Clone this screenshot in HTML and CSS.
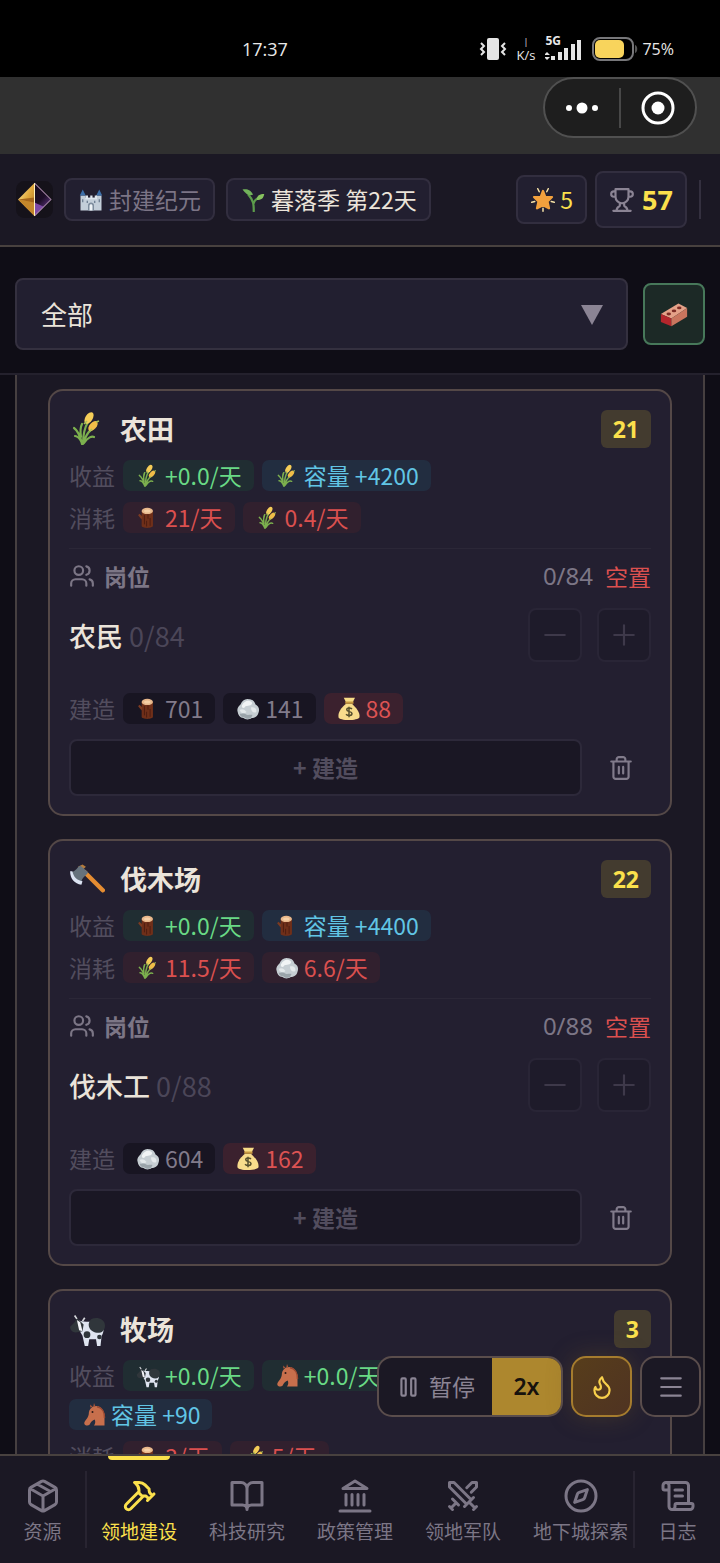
FILE: index.html
```html
<!DOCTYPE html>
<html lang="zh-CN">
<head>
<meta charset="utf-8">
<meta name="viewport" content="width=device-width, initial-scale=1">
<title>领地建设</title>
<link rel="stylesheet" href="styles.css">
</head>
<body>
<svg class="sprite" aria-hidden="true">
  <defs>
    <linearGradient id="gold" x1="0" y1="0" x2="1" y2="1"><stop offset="0" stop-color="#fff0a8"/><stop offset=".5" stop-color="#e0a83c"/><stop offset="1" stop-color="#a4651c"/></linearGradient>
    <linearGradient id="violet" x1="0" y1="0" x2="1" y2="1"><stop offset="0" stop-color="#140c18"/><stop offset=".6" stop-color="#1c0d26"/><stop offset="1" stop-color="#8c4fc0"/></linearGradient>
  </defs>
  <symbol id="wheat" viewBox="0 -2 36 36">
    <g fill="none" stroke="#7cb04e" stroke-width="2.200" stroke-linecap="round"><path d="M13 31C11 22 8 17 5 15M14 31C14 21 16 14 19 9M14 31c2-7 5-12 9-15M13 30C10 24 8 23 6 23M15 30c4-6 8-7 10-6M12 24C11 18 11 15 13 11"/></g>
    <ellipse cx="20" cy="5" rx="3.600" ry="6.500" transform="rotate(32 20 5)" fill="#f5cd58"/>
    <ellipse cx="24" cy="13" rx="3.300" ry="6" transform="rotate(42 24 13)" fill="#f0bd48"/>
    <path d="M15 11l3-3M21 18l2-2M27 9l3-1" stroke="#a6c057" stroke-width="1.500"/>
  </symbol>
  <symbol id="wood" viewBox="1 0 34 34">
    <path d="M9 7v21c0 4 16 4 16 0V7z" fill="#6f2f19"/><path d="M10 15 6 11 4 13l5 6z" fill="#7c3a20"/>
    <path d="M13 13v13M18 12v6M21 17v11M16 21v8" stroke="#4b1d10" stroke-width="1.300"/>
    <ellipse cx="17" cy="7" rx="8" ry="4.500" fill="#e7b78b"/><ellipse cx="17" cy="7" rx="4.500" ry="2.200" fill="#f5d0a6"/>
  </symbol>
  <symbol id="stone" viewBox="0 0 32 32">
    <path d="M2 19c-1-4 2-7 4-9 2-5 6-8 11-7 5 0 8 3 9 7 4 2 6 6 4 11-1 5-5 7-9 7-4 3-9 2-11 0-5 0-7-4-8-9z" fill="#c6ced3"/>
    <path d="M8 11c3-6 9-8 13-4 2 4-4 5-8 5-2 4-6 3-5-1z" fill="#f1f4f5"/><path d="M20 14c5-1 8 2 7 6-3 2-7 0-7-6z" fill="#e6eaec"/><path d="M5 17c4-2 7 0 9 3-3 3-8 2-9-3z" fill="#e3e8ea"/>
    <path d="M5 22c3 1 6-1 8 1s6 0 9 1l-2 4c-3 2-7 1-9-1-4 0-6-2-6-5z" fill="#9aa4aa"/>
  </symbol>
  <symbol id="money" viewBox="0 0 32 32">
    <path d="M9 1h15l-3 6h-9z" fill="#f7dc86"/><path d="M12 9C6 14 1 20 2 27c1 5 26 5 28 0 1-7-5-13-10-18z" fill="#f8dc8c"/><path d="M11 6h11v3H11z" fill="#c79840"/>
    <path d="M20 16c-2-2-7-2-7 1s7 2 7 5-5 4-8 1M16 13v14" fill="none" stroke="#57502f" stroke-width="2"/>
  </symbol>
  <symbol id="axe" viewBox="0 0 32 32">
    <path d="M14 10 30 26" stroke="#e58d32" stroke-width="4" stroke-linecap="round"/><path d="M8 5l4-2 3 2-4 4z" fill="#b47b3c"/>
    <path d="M2 10C6 9 8 5 10 4l7 6c-2 4-6 4-6 10C5 20 1 15 2 10z" fill="#66727c"/><path d="M1 9c0 7 4 11 10 12l1-3C7 17 4 14 3 9z" fill="#dce3f2"/>
  </symbol>
  <symbol id="cow" viewBox="0 0 32 32">
    <path d="M8 8c6 3 14 0 20 3 4 3 3 8 1 11l-1 9h-3l-1-6h-6l-1 6h-3l-2-9-4-7z" fill="#dfe4f0"/>
    <path d="M20 7c5-2 12 0 12 6s-6 8-11 5-4-9-1-11zM1 14l4-4 2-4 3 3 3 3-1 6-6 1c-3 0-5-2-5-5z" fill="#30363b"/>
    <path d="M7 8l3 2 2 8-3-1z" fill="#f2f3f8"/><circle cx="16" cy="21" r="3" fill="#30363b"/><circle cx="27" cy="23" r="2" fill="#30363b"/><path d="M7 7 5 4M12 9l2-3" stroke="#d5d7db" stroke-width="1.500"/>
  </symbol>
  <symbol id="horse" viewBox="0 0 32 32">
    <path d="M14 5C21 2 28 6 30 15v15H16c2-3 2-5 1-8-3 1-5 3-7 7-2 2-7 1-7-2 0-3 5-6 6-12 0-4 1-7 5-10z" fill="#c76f4c"/>
    <path d="M15 5l1-5 2 5M11 6l0-4 3 3" fill="#a9553a"/><circle cx="14" cy="12" r="1.300" fill="#2b1a16"/><path d="M20 5c7 1 10 8 10 15" fill="none" stroke="#9b4a32" stroke-width="2"/>
  </symbol>
  <symbol id="castle" viewBox="0 0 32 32">
    <path d="M2 10h7v20H2zM23 10h7v20h-7zM8 13h16v17H8z" fill="#c3ced9"/><path d="M1 10l4-8 4 8zM23 10l4-8 4 8z" fill="#3d6fa9"/>
    <path d="M9 13v-3h3v3h3v-3h3v3h3v-3h3v5H8z" fill="#dee6ee"/><path d="M12 30v-7c0-5 8-5 8 0v7z" fill="#7d8c9d"/><path d="M14 30v-6c0-3 4-3 4 0v6z" fill="#edf2f6"/><path d="M5 15v4M27 15v4M11 17v3M21 17v3" stroke="#5f7186" stroke-width="1.500"/>
  </symbol>
  <symbol id="sprout" viewBox="0 0 32 32">
    <path d="M17 31c0-9 0-14-7-22M17 20c1-4 4-6 8-8" fill="none" stroke="#5c9c4b" stroke-width="3" stroke-linecap="round"/><path d="M2 2c6-1 11 0 14 7-6 2-9-1-14-7z" fill="#72b35b"/><path d="M31 8c-1 6-4 8-10 8 0-6 4-8 10-8z" fill="#87c25f"/>
  </symbol>
  <symbol id="star" viewBox="0 0 32 32">
    <path d="m16 4 3 8h9l-6 6 2 9-8-4-8 4 2-9-6-6h9z" fill="#f3a13d" stroke="#f3a13d" stroke-width="3" stroke-linejoin="round"/><path d="M9 1l2 4M23 1l-2 4M1 19l4-1M31 19l-4-1M16 27v4" stroke="#f8e4a8" stroke-width="2" stroke-linecap="round"/>
  </symbol>
  <symbol id="brick" viewBox="0 0 32 32">
    <path d="M1 16 21 4l10 5-18 12z" fill="#e4a188"/><path d="m1 16 12 5v9L1 25z" fill="#b4262c"/><path d="m13 21 18-12v10L13 30z" fill="#c9755e"/>
    <g fill="#7c2c25"><ellipse cx="10" cy="16" rx="2.600" ry="1.600"/><ellipse cx="16" cy="12.500" rx="2.600" ry="1.600"/><ellipse cx="22" cy="9" rx="2.600" ry="1.600"/></g>
  </symbol>
  <symbol id="users" viewBox="0 0 24 24"><circle cx="9" cy="7" r="4"/><path d="M16 21v-2a4 4 0 0 0-4-4H6a4 4 0 0 0-4 4v2M22 21v-2a4 4 0 0 0-3-3.870M16 3.130a4 4 0 0 1 0 7.750"/></symbol>
  <symbol id="trash" viewBox="0 0 24 24"><path d="M3 6h18M19 6v14c0 1-1 2-2 2H7c-1 0-2-1-2-2V6M8 6V4c0-1 1-2 2-2h4c1 0 2 1 2 2v2M10 11v6M14 11v6"/></symbol>
  <symbol id="minus" viewBox="0 0 24 24"><path d="M3 12h18"/></symbol>
  <symbol id="plus" viewBox="0 0 24 24"><path d="M3 12h18M12 3v18"/></symbol>
</svg>

<div class="app">
  <div class="status">
    <span class="clock">17:37</span>
    <div class="status-icons">
      <svg class="vibrate" viewBox="0 0 28 24"><rect x="8" y="1" width="12" height="22" rx="2" fill="#e4e4e4"/><path d="m2 6 3 3-3 3 3 3-3 3M26 6l-3 3 3 3-3 3 3 3" fill="none" stroke="#e4e4e4" stroke-width="2"/></svg>
      <span class="rate"><span>|</span><span>K/s</span></span>
      <span class="network"><span class="gen">5G</span><svg class="bars" viewBox="0 0 37 24"><path d="M2 15l3 3H-1zM2 23l3-3H-1zM6 19h4v4H6zM13 15h4v8h-4zM19 11h4v12h-4zM26 7h4v16h-4zM32 3h4v20h-4z" fill="#e4e4e4"/></svg></span>
      <svg class="battery" viewBox="0 0 46 24"><rect x="1" y="1" width="40" height="22" rx="7" fill="none" stroke="#77777a" stroke-width="2"/><rect x="3" y="3" width="29" height="18" rx="5" fill="#f8d45c"/><path d="M43 8c3 1 3 7 0 8z" fill="#555"/></svg>
      <span class="percent">75%</span>
    </div>
  </div>
  <div class="host">
    <div class="capsule">
      <button class="cap-btn" aria-label="更多"><svg width="34" height="16" viewBox="0 0 34 16" fill="#fff"><circle cx="4" cy="8" r="3"/><circle cx="17" cy="8" r="5.500"/><circle cx="30" cy="8" r="3"/></svg></button>
      <button class="cap-btn" aria-label="关闭"><svg width="36" height="36" viewBox="0 0 36 36"><circle cx="18" cy="18" r="15" fill="none" stroke="#fff" stroke-width="3"/><circle cx="18" cy="18" r="6.500" fill="#fff"/></svg></button>
    </div>
  </div>

  <header class="header">
    <svg class="gem" viewBox="0 0 36 36"><rect width="36" height="36" rx="8" fill="#15121a"/><path d="M18 2 34 18 18 34 2 18z" fill="url(#violet)"/><path d="M18 2v32L2 18z" fill="url(#gold)"/><path d="M2 18l16 3v13z" fill="#c4872b"/><path d="M18 21l9 4 7-7-16 16z" fill="#7d49a6"/><path d="M2 18l16-2v5z" fill="#a4651c"/><path d="M18 2l16 16-16 16" fill="none" stroke="#a585a5"/><path d="M18 2v32" stroke="#fff0bd"/></svg>
    <div class="pill muted"><svg class="emoji"><use href="#castle"/></svg><span>封建纪元</span></div>
    <div class="pill"><svg class="emoji"><use href="#sprout"/></svg><span>暮落季 第22天</span></div>
    <div class="stats">
      <div class="pill stat"><svg class="emoji"><use href="#star"/></svg><span>5</span></div>
      <div class="pill stat score"><svg class="line trophy" viewBox="0 0 24 24"><path d="M6 9H4.500a2.500 2.500 0 0 1 0-5H6M18 9h1.500a2.500 2.500 0 0 0 0-5H18M4 22h16M10 14.660V17c0 .55-.47.98-.97 1.210C7.850 18.750 7 20.240 7 22M14 14.660V17c0 .55.47.98.97 1.210C16.150 18.750 17 20.240 17 22M18 2H6v7a6 6 0 0 0 12 0V2Z"/></svg><span>57</span></div>
      <i class="rule"></i>
    </div>
  </header>

  <div class="toolbar">
    <label class="filter">
      <select aria-label="建筑分类"><option>全部</option></select>
      <svg class="caret" viewBox="0 0 22 20"><path d="M0 0h22L11 20z" fill="#8b8494"/></svg>
    </label>
    <button class="brick-btn" aria-label="可建造"><svg class="emoji"><use href="#brick"/></svg></button>
  </div>

  <main class="viewport">
    <div class="panel">
      <article class="card">
        <div class="card-head"><svg class="card-icon"><use href="#wheat"/></svg><h2>农田</h2><span class="count">21</span></div>
        <div class="row"><span class="label">收益</span><span class="chip gain"><svg class="emoji"><use href="#wheat"/></svg>+0.0/天</span><span class="chip cap"><svg class="emoji"><use href="#wheat"/></svg>容量 +4200</span></div>
        <div class="row"><span class="label">消耗</span><span class="chip cost"><svg class="emoji"><use href="#wood"/></svg>21/天</span><span class="chip cost"><svg class="emoji"><use href="#wheat"/></svg>0.4/天</span></div>
        <section class="jobs">
          <div class="jobs-head"><svg class="line"><use href="#users"/></svg><h3>岗位</h3><span class="filled">0/84</span><span class="vacant">空置</span></div>
          <div class="job"><span class="job-name">农民 <small>0/84</small></span><button class="step" disabled aria-label="减少"><svg class="line"><use href="#minus"/></svg></button><button class="step" disabled aria-label="增加"><svg class="line"><use href="#plus"/></svg></button></div>
        </section>
        <div class="row"><span class="label">建造</span><span class="chip"><svg class="emoji"><use href="#wood"/></svg>701</span><span class="chip"><svg class="emoji"><use href="#stone"/></svg>141</span><span class="chip lack"><svg class="emoji"><use href="#money"/></svg>88</span></div>
        <div class="actions"><button class="build" disabled>+ 建造</button><button class="remove" aria-label="拆除"><svg class="line"><use href="#trash"/></svg></button></div>
      </article>

      <article class="card">
        <div class="card-head"><svg class="card-icon"><use href="#axe"/></svg><h2>伐木场</h2><span class="count">22</span></div>
        <div class="row"><span class="label">收益</span><span class="chip gain"><svg class="emoji"><use href="#wood"/></svg>+0.0/天</span><span class="chip cap"><svg class="emoji"><use href="#wood"/></svg>容量 +4400</span></div>
        <div class="row"><span class="label">消耗</span><span class="chip cost"><svg class="emoji"><use href="#wheat"/></svg>11.5/天</span><span class="chip cost"><svg class="emoji"><use href="#stone"/></svg>6.6/天</span></div>
        <section class="jobs">
          <div class="jobs-head"><svg class="line"><use href="#users"/></svg><h3>岗位</h3><span class="filled">0/88</span><span class="vacant">空置</span></div>
          <div class="job"><span class="job-name">伐木工 <small>0/88</small></span><button class="step" disabled aria-label="减少"><svg class="line"><use href="#minus"/></svg></button><button class="step" disabled aria-label="增加"><svg class="line"><use href="#plus"/></svg></button></div>
        </section>
        <div class="row"><span class="label">建造</span><span class="chip"><svg class="emoji"><use href="#stone"/></svg>604</span><span class="chip lack"><svg class="emoji"><use href="#money"/></svg>162</span></div>
        <div class="actions"><button class="build" disabled>+ 建造</button><button class="remove" aria-label="拆除"><svg class="line"><use href="#trash"/></svg></button></div>
      </article>

      <article class="card">
        <div class="card-head"><svg class="card-icon"><use href="#cow"/></svg><h2>牧场</h2><span class="count">3</span></div>
        <div class="row"><span class="label">收益</span><span class="chip gain"><svg class="emoji"><use href="#cow"/></svg>+0.0/天</span><span class="chip gain"><svg class="emoji"><use href="#horse"/></svg>+0.0/天</span></div>
        <div class="row more"><span class="chip cap"><svg class="emoji"><use href="#horse"/></svg>容量 +90</span></div>
        <div class="row"><span class="label">消耗</span><span class="chip cost"><svg class="emoji"><use href="#wood"/></svg>3/天</span><span class="chip cost"><svg class="emoji"><use href="#wheat"/></svg>5/天</span></div>
      </article>
    </div>
  </main>

  <div class="dock">
    <div class="controls">
      <div class="speed">
        <button class="pause"><svg class="line" viewBox="0 0 24 24"><rect x="5" y="4" width="4" height="16" rx="1"/><rect x="14" y="4" width="4" height="16" rx="1"/></svg>暂停</button>
        <button class="rate-btn">2x</button>
      </div>
      <button class="square fire" aria-label="加速"><svg class="line" viewBox="0 0 24 24"><path d="M8.500 14.500A2.500 2.500 0 0 0 11 12c0-1.380-.5-2-1-3-1.070-2.140-.22-4.050 2-6 .5 2.500 2 4.900 4 6.500 2 1.600 3 3.500 3 5.500a7 7 0 1 1-14 0c0-1.150.43-2.290 1-3a2.500 2.500 0 0 0 2.500 2.500z"/></svg></button>
      <button class="square" aria-label="菜单"><svg class="line" viewBox="0 0 24 24"><path d="M3 4h18M3 12h18M3 20h18"/></svg></button>
    </div>
    <nav class="nav">
      <a class="tab edge" href="#resources"><svg class="line" viewBox="0 0 24 24"><path d="M21 8a2 2 0 0 0-1-1.730l-7-4a2 2 0 0 0-2 0l-7 4A2 2 0 0 0 3 8v8a2 2 0 0 0 1 1.730l7 4a2 2 0 0 0 2 0l7-4A2 2 0 0 0 21 16ZM3.300 7l8.700 5 8.700-5M12 22V12M8 4l9 5"/></svg>资源</a>
      <div class="tabs">
        <a class="tab active" href="#build"><svg class="line" viewBox="0 0 24 24"><path d="m15 12-8.500 8.500a2.120 2.120 0 0 1-3-3L12 9M17.640 15 22 10.640M20.910 11.700l-1.250-1.250c-.6-.6-.93-1.400-.93-2.250v-.86L16.010 4.600a5.560 5.560 0 0 0-3.940-1.640H9l.92.82A6.180 6.180 0 0 1 12 8.400v1.560l2 2h2.470l2.260 1.910"/></svg>领地建设</a>
        <a class="tab" href="#tech"><svg class="line" viewBox="0 0 24 24"><path d="M2 3h6a4 4 0 0 1 4 4v14a3 3 0 0 0-3-3H2zM22 3h-6a4 4 0 0 0-4 4v14a3 3 0 0 1 3-3h7z"/></svg>科技研究</a>
        <a class="tab" href="#policy"><svg class="line" viewBox="0 0 24 24"><path d="M2 22h20M6 18v-7M10 18v-7M14 18v-7M18 18v-7M12 2l8 5H4z"/></svg>政策管理</a>
        <a class="tab" href="#army"><svg class="line" viewBox="0 0 24 24"><path d="M14.500 17.500 3 6V3h3l11.500 11.500M13 19l6-6M16 16l4 4M19 21l2-2M14.500 6.500 18 3h3v3l-3.500 3.500M5 14l4 4M7 17l-3 3M3 19l2 2"/></svg>领地军队</a>
        <a class="tab" href="#dungeon"><svg class="line" viewBox="0 0 24 24"><circle cx="12" cy="12" r="10"/><path d="m16.240 7.760-1.800 5.410a2 2 0 0 1-1.270 1.270L7.760 16.240l1.800-5.410a2 2 0 0 1 1.270-1.270z"/></svg>地下城探索</a>
      </div>
      <a class="tab edge" href="#log"><svg class="line" viewBox="0 0 24 24"><path d="M15 12h-5M15 8h-5M19 17V5a2 2 0 0 0-2-2H4M8 21h12a2 2 0 0 0 2-2v-1a1 1 0 0 0-1-1H11a1 1 0 0 0-1 1v1a2 2 0 1 1-4 0V5a2 2 0 1 0-4 0v2a1 1 0 0 0 1 1h3"/></svg>日志</a>
    </nav>
  </div>
</div>
</body>
</html>
```
FILE: styles.css
```css
* { box-sizing: border-box; }
body {
  margin: 0;
  background: #0f0d16;
  color: #ebe4da;
  font: 23px/31px "Noto Sans CJK SC", sans-serif;
}
button, select { font: inherit; color: inherit; margin: 0; padding: 0; }
button { display: flex; align-items: center; justify-content: center; background: none; border: 0; }
h2, h3 { margin: 0; }
svg { flex: none; display: block; }
.sprite { position: absolute; width: 0; height: 0; }
.emoji { width: 26px; height: 24px; }
.line { width: 26px; height: 26px; fill: none; stroke: currentColor; stroke-width: 2; stroke-linecap: round; stroke-linejoin: round; }

.app { display: flex; flex-direction: column; height: 100vh; overflow: hidden; }

.status {
  display: flex; justify-content: space-between; align-items: center;
  flex: none; padding: 34px 46px 13px 242px;
  background: #000; color: #e8e8e8;
  font: 18px/30px "Open Sans", sans-serif;
}
.status-icons { display: flex; align-items: center; gap: 10px; }
.vibrate { width: 28px; height: 24px; }
.rate { display: flex; flex-direction: column; align-items: center; font-size: 13px; line-height: 15px; }
.rate span:first-child { font-size: 9px; line-height: 12px; }
.network { position: relative; }
.gen { position: absolute; left: 0; top: -2px; font: bold 12px/12px "Open Sans", sans-serif; }
.bars { width: 37px; height: 24px; }
.battery { width: 46px; height: 24px; }
.percent { font-size: 16px; margin-left: -6px; }

.host { flex: none; display: flex; justify-content: flex-end; padding: 0 23px 16px 0; background: #303030; }
.capsule { display: flex; align-items: center; height: 61px; border: 2px solid #505050; border-radius: 31px; background: #1e1e1e; }
.cap-btn { width: 74px; height: 40px; }
.cap-btn + .cap-btn { border-left: 2px solid #484848; width: 76px; }

.header {
  flex: none; display: flex; align-items: center; gap: 11px;
  padding: 17px 0 17px 16px; overflow: hidden;
  background: #1b1824; border-bottom: 2px solid #48413f;
}
.gem { width: 37px; height: 37px; }
.pill {
  display: flex; align-items: center; gap: 5px; flex: none;
  padding: 4px 12px; border: 2px solid #322e3f; border-radius: 8px;
  background: #221f30; white-space: nowrap;
}
.muted { color: #7c7586; }
.stats { display: flex; align-items: center; gap: 8px; margin-left: auto; padding-right: 19px; }
.stat { padding: 7px 12px; color: #fbe04c; gap: 4px; }
.score { padding: 11px 12px; gap: 7px; font: bold 27px/31px "Noto Sans", sans-serif; }
.trophy { color: #8b8494; }
.rule { width: 2px; height: 39px; margin-left: 4px; background: #34303f; }

.toolbar { flex: none; display: flex; align-items: center; gap: 15px; padding: 31px 15px 23px; border-bottom: 2px solid #24212d; background: #0f0d16; }
.filter { position: relative; flex: 1; display: block; }
.filter select {
  appearance: none; width: 100%; padding: 18px 60px 18px 24px;
  border: 2px solid #34303f; border-radius: 8px; background: #221f30; font-size: 26px; line-height: 32px; height: 72px; display: block;
}
.caret { position: absolute; right: 25px; top: 27px; width: 22px; height: 20px; pointer-events: none; }
.brick-btn { width: 62px; height: 62px; border: 2px solid #47785a; border-radius: 8px; background: #1c2926; }
.brick-btn .emoji { width: 28px; height: 28px; }

.viewport { flex: 1; min-height: 0; overflow: hidden; padding: 0 15px; }
.panel { display: flex; flex-direction: column; gap: 23px; min-height: 100%; padding: 14px 31px; border: solid #463f40; border-width: 0 2px; background: #1b1824; }
.card { border: 2px solid #544847; border-radius: 15px; padding: 19px 19px 18px; background: #231f30; }
.card-head { display: flex; align-items: center; margin-bottom: 12px; }
.card-icon { width: 36px; height: 36px; margin-right: 15px; }
.card-head h2 { font-size: 27px; line-height: 38px; font-weight: 700; }
.count { margin-left: auto; padding: 0 12px; border-radius: 6px; background: #433b2f; color: #fbe04c; font: bold 23px/38px "Noto Sans", sans-serif; }
.row { display: flex; flex-wrap: wrap; align-items: center; gap: 8px; }
.row + .row { margin-top: 11px; }
.row + .more { margin-top: 8px; }
.label { color: #524d5e; }
.chip { display: flex; align-items: center; gap: 4px; padding: 0 12px; border-radius: 7px; background: #181522; color: #817b8b; white-space: nowrap; }
.gain { background: #202d32; color: #69da85; }
.cap { background: #222d40; color: #61c5e5; }
.cost { background: #31202e; color: #db504f; }
.lack { background: #3b212e; color: #dc5353; }

.jobs { margin: 15px 0 31px; padding-top: 10px; border-top: 1px solid #2b2737; }
.jobs-head { display: flex; align-items: center; margin-bottom: 15px; color: #7c7686; line-height: 34px; }
.jobs-head h3 { margin: 0 auto 0 9px; font-size: 23px; font-weight: 700; }
.filled { font-family: "Noto Sans", sans-serif; font-size: 24px; }
.vacant { margin-left: 12px; color: #db504f; }
.job { display: flex; align-items: center; gap: 15px; }
.job-name { margin-right: auto; font-size: 27px; font-weight: 500; }
.job-name small { font-size: 27px; font-weight: 400; color: #4b4658; }
.step { width: 54px; height: 54px; border: 2px solid #292536; border-radius: 8px; background: #1e1b2a; color: #3e394a; }
.step .line { width: 26px; height: 26px; }

.actions { display: flex; gap: 12px; margin-top: 15px; }
.build { flex: 1; height: 57px; border: 2px solid #2d293a; border-radius: 8px; background: #1a1724; color: #524d5e; font-weight: 700; }
.remove { width: 57px; padding-right: 4px; color: #817b8b; }

.dock { flex: none; position: relative; }
.controls { position: absolute; right: 19px; bottom: 100%; display: flex; gap: 8px; padding-bottom: 37px; }
.speed { display: flex; height: 61px; border: 2px solid #5a4d4c; border-radius: 15px; background: #1b1824; overflow: hidden; }
.pause { gap: 7px; padding: 0 17px; color: #8b8494; }
.rate-btn { width: 69px; background: #ad872e; color: #17120d; font: 600 23px/31px "Noto Sans", sans-serif; }
.square { width: 61px; height: 61px; border: 2px solid #5a4d4c; border-radius: 15px; background: #1b1824; color: #8b8494; }
.fire { border-color: #a57c2e; background: linear-gradient(135deg, #573d1b, #4f3322); color: #f8d04c; box-shadow: 0 0 23px #6a502866; }
.square .line { width: 26px; height: 26px; }

.nav { display: flex; height: 109px; border-top: 2px solid #48413f; background: #1b1824; }
.tabs { flex: 1; min-width: 0; display: flex; position: relative; overflow: hidden; }
.tabs::before, .tabs::after { content: ""; position: absolute; top: 15px; bottom: 15px; width: 2px; background: #282431; }
.tabs::before { left: 0; }
.tabs::after { right: 0; }
.tab { position: relative; flex: none; display: flex; flex-direction: column; align-items: center; gap: 3px; padding: 22px 16px 0; color: #7c7686; font-size: 19px; line-height: 28px; text-decoration: none; white-space: nowrap; }
.tab .line { width: 36px; height: 36px; }
.edge { width: 85px; }
.active { color: #fbe04c; }
.active::before { content: ""; position: absolute; top: 0; left: 23px; right: 23px; height: 4px; border-radius: 0 0 4px 4px; background: #fbe04c; }
```
